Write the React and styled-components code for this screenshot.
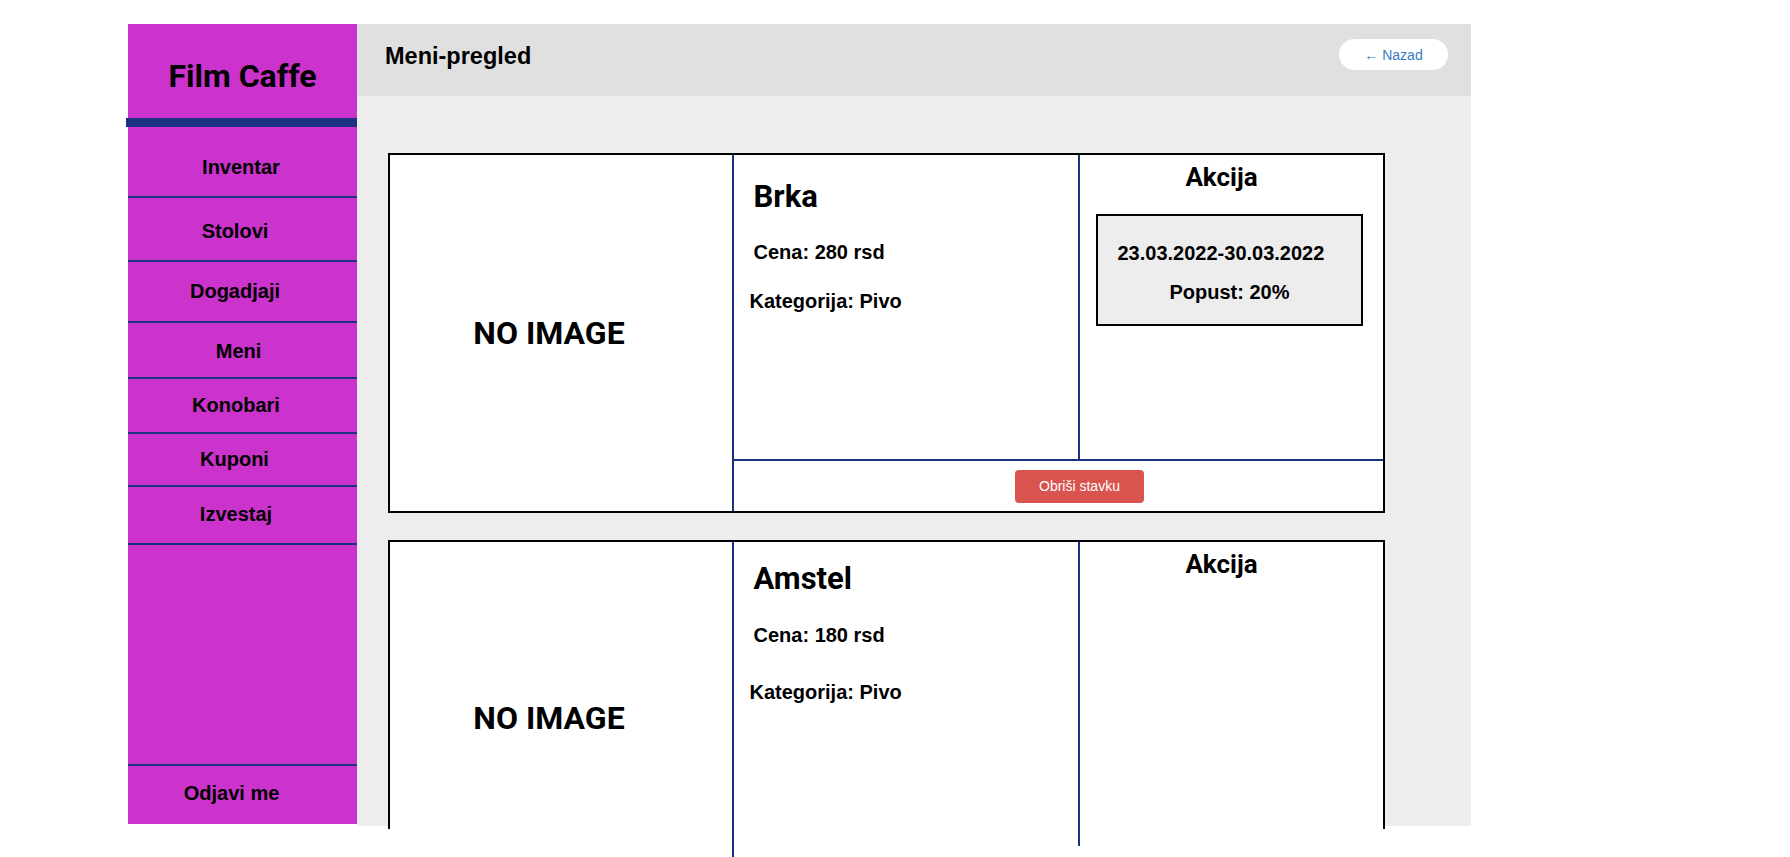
import React from 'react';
import styled, { createGlobalStyle } from 'styled-components';

const GlobalStyle = createGlobalStyle`
  html {
    overflow: hidden;
  }
  html, body {
    margin: 0;
    padding: 0;
    background: #ffffff;
  }
  body {
    font-family: "Liberation Sans", Arial, sans-serif;
    color: #000;
  }
`;

const BLUE = '#1c3281';

const Page = styled.div`
  box-sizing: border-box;
  min-height: 100vh;
  display: flex;
  align-items: flex-start;
  padding: 24px 0 0 128px;
`;

const Sidebar = styled.aside`
  width: 229px;
  height: 800px;
  flex-shrink: 0;
  background: #cc33cc;
  display: flex;
  flex-direction: column;
`;

const Brand = styled.h1`
  margin: 0;
  height: 94px;
  box-sizing: border-box;
  padding-top: 33px;
  text-align: center;
  font-family: Roboto, "Liberation Sans", sans-serif;
  font-weight: 700;
  font-size: 32px;
  line-height: 38px;
`;

const BrandBar = styled.div`
  height: 9px;
  margin: 0 -1px 0 -2px;
  background: ${BLUE};
`;

const NavItem = styled.a`
  display: block;
  box-sizing: border-box;
  height: ${(p) => p.$h}px;
  padding-top: ${(p) => p.$pt}px;
  padding-right: ${(p) => p.$pr}px;
  border-bottom: 2px solid ${BLUE};
  text-align: center;
  font-family: "Liberation Sans", Arial, sans-serif;
  font-weight: 700;
  font-size: 20px;
  line-height: 23px;
  color: #000;
  text-decoration: none;
`;

const Spacer = styled.div`
  flex: 1;
`;

const LogoutItem = styled.a`
  display: block;
  box-sizing: border-box;
  height: 60px;
  padding-top: 16px;
  padding-right: 22px;
  border-top: 2px solid ${BLUE};
  text-align: center;
  font-family: "Liberation Sans", Arial, sans-serif;
  font-weight: 700;
  font-size: 20px;
  line-height: 23px;
  color: #000;
`;

const Main = styled.main`
  width: 1114px;
  height: 802px;
  flex-shrink: 0;
  background: #ededed;
  display: flex;
  flex-direction: column;
`;

const Header = styled.header`
  height: 72px;
  flex-shrink: 0;
  box-sizing: border-box;
  background: #e0e0e0;
  display: flex;
  justify-content: space-between;
  align-items: flex-start;
  padding: 0 23px 0 28px;
`;

const PageTitle = styled.h2`
  margin: 18px 0 0 0;
  font-family: "Liberation Sans", Arial, sans-serif;
  font-weight: 700;
  font-size: 23.5px;
  line-height: 28px;
`;

const BackButton = styled.button`
  margin-top: 15px;
  width: 109px;
  height: 31px;
  border: none;
  border-radius: 16px;
  background: #ffffff;
  color: #3a7cc3;
  font-family: "Liberation Sans", Arial, sans-serif;
  font-size: 14px;
  cursor: pointer;
`;

const CardList = styled.div`
  display: flex;
  flex-direction: column;
  gap: 27px;
  padding: 57px 0 0 31px;
`;

const Card = styled.section`
  width: 997px;
  box-sizing: border-box;
  flex-shrink: 0;
  background: #ffffff;
  border: 2px solid #000;
  display: grid;
  grid-template-columns: 342px 346px 305px;
  grid-template-rows: 304px 52px;
  ${(p) =>
    p.$cut &&
    `
    height: 289px;
    border-bottom: none;
    grid-template-rows: 287px;
  `}
`;

const ImageCell = styled.div`
  grid-row: 1 / span 2;
  ${(p) => (p.$h ? `height: ${p.$h}px; align-self: start;` : '')}
  display: flex;
  align-items: center;
  justify-content: center;
  padding-right: 24px;
  font-family: Roboto, "Liberation Sans", sans-serif;
  font-weight: 700;
  font-size: 32px;
  line-height: 38px;
`;

const InfoCol = styled.div`
  box-sizing: border-box;
  ${(p) => (p.$h ? `height: ${p.$h}px; align-self: start;` : '')}
  border-left: 2px solid ${BLUE};
  padding: ${(p) => p.$pt}px 0 0 19.5px;
  display: flex;
  flex-direction: column;
`;

const ItemName = styled.h1`
  margin: 0;
  font-family: Roboto, "Liberation Sans", sans-serif;
  font-weight: 700;
  font-size: 31px;
  line-height: 36px;
`;

const InfoLine = styled.p`
  margin: ${(p) => p.$gap}px 0 0 ${(p) => p.$indent || 0}px;
  font-family: "Liberation Sans", Arial, sans-serif;
  font-weight: 700;
  font-size: 20px;
  line-height: 23px;
`;

const SaleCol = styled.div`
  box-sizing: border-box;
  ${(p) => (p.$h ? `height: ${p.$h}px; align-self: start;` : '')}
  border-left: 2px solid ${BLUE};
  padding-top: 6.5px;
`;

const SaleTitle = styled.h3`
  margin: 0;
  padding-right: 20px;
  text-align: center;
  font-family: Roboto, "Liberation Sans", sans-serif;
  font-weight: 700;
  font-size: 26px;
  line-height: 30px;
`;

const SaleBox = styled.div`
  box-sizing: border-box;
  height: 112px;
  margin: 22px 20px 0 16px;
  border: 2px solid #000;
  background: #ededed;
  padding-top: 26px;
  font-family: "Liberation Sans", Arial, sans-serif;
  font-weight: 700;
  font-size: 20px;
  line-height: 23px;
`;

const SaleDates = styled.div`
  padding-left: 19.5px;
`;

const SaleDiscount = styled.div`
  margin-top: 16px;
  text-align: center;
`;

const ActionRow = styled.div`
  grid-column: 2 / span 2;
  border-top: 2px solid ${BLUE};
  border-left: 2px solid ${BLUE};
  display: flex;
  align-items: center;
  justify-content: center;
  padding-left: 42px;
`;

const DeleteButton = styled.button`
  width: 129px;
  height: 33px;
  border: none;
  border-radius: 4px;
  background: #d9534f;
  color: #fff;
  font-family: "Liberation Sans", Arial, sans-serif;
  font-size: 14px;
  cursor: pointer;
`;

const navItems = [
  { label: 'Inventar', h: 71, pt: 29.4, pr: 3 },
  { label: 'Stolovi', h: 64, pt: 22.4, pr: 15 },
  { label: 'Dogadjaji', h: 61, pt: 18.4, pr: 15 },
  { label: 'Meni', h: 56, pt: 17.4, pr: 8 },
  { label: 'Konobari', h: 55, pt: 14.7, pr: 13 },
  { label: 'Kuponi', h: 53, pt: 13.7, pr: 16 },
  { label: 'Izvestaj', h: 58, pt: 15.7, pr: 13 },
];

const items = [
  {
    name: 'Brka',
    price: 280,
    category: 'Pivo',
    sale: { dates: '23.03.2022-30.03.2022', discount: 20 },
    spacing: { pt: 24, g1: 25.5, g2: 26 },
  },
  {
    name: 'Amstel',
    price: 180,
    category: 'Pivo',
    sale: null,
    cut: true,
    spacing: { pt: 19, g1: 26.5, g2: 34 },
  },
];

function MenuCard({ item }) {
  const { spacing, cut } = item;
  return (
    <Card $cut={cut}>
      <ImageCell $h={cut ? 352 : 0}>NO IMAGE</ImageCell>
      <InfoCol $pt={spacing.pt} $h={cut ? 320 : 0}>
        <ItemName>{item.name}</ItemName>
        <InfoLine $gap={spacing.g1}>Cena: {item.price} rsd</InfoLine>
        <InfoLine $gap={spacing.g2} $indent={-4}>
          Kategorija: {item.category}
        </InfoLine>
      </InfoCol>
      <SaleCol $h={cut ? 304 : 0}>
        <SaleTitle>Akcija</SaleTitle>
        {item.sale && (
          <SaleBox>
            <SaleDates>{item.sale.dates}</SaleDates>
            <SaleDiscount>Popust: {item.sale.discount}%</SaleDiscount>
          </SaleBox>
        )}
      </SaleCol>
      {!cut && (
        <ActionRow>
          <DeleteButton>Obriši stavku</DeleteButton>
        </ActionRow>
      )}
    </Card>
  );
}

export default function App() {
  return (
    <>
      <GlobalStyle />
      <Page>
        <Sidebar>
          <Brand>Film Caffe</Brand>
          <BrandBar />
          {navItems.map((n) => (
            <NavItem key={n.label} $h={n.h} $pt={n.pt} $pr={n.pr}>
              {n.label}
            </NavItem>
          ))}
          <Spacer />
          <LogoutItem>Odjavi me</LogoutItem>
        </Sidebar>
        <Main>
          <Header>
            <PageTitle>Meni-pregled</PageTitle>
            <BackButton>← Nazad</BackButton>
          </Header>
          <CardList>
            {items.map((it) => (
              <MenuCard key={it.name} item={it} />
            ))}
          </CardList>
        </Main>
      </Page>
    </>
  );
}
